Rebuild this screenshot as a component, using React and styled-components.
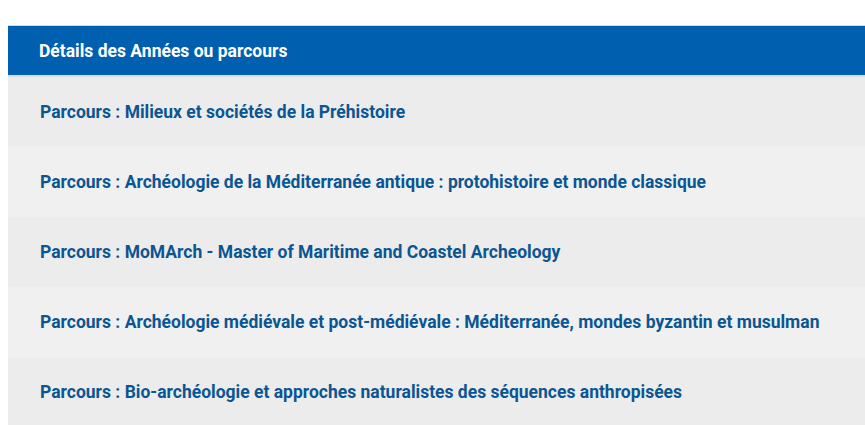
import styled, { createGlobalStyle } from "styled-components";

const GlobalStyle = createGlobalStyle`
  body {
    margin: 0;
    background: #fff;
    font-family: Roboto, "Liberation Sans", sans-serif;
  }
`;

const parcours = [
  "Milieux et sociétés de la Préhistoire",
  "Archéologie de la Méditerranée antique : protohistoire et monde classique",
  "MoMArch - Master of Maritime and Coastel Archeology",
  "Archéologie médiévale et post-médiévale : Méditerranée, mondes byzantin et musulman",
  "Bio-archéologie et approches naturalistes des séquences anthropisées",
];

const App = () => {
  return (
    <>
      <GlobalStyle />
      <Page>
        <Panel>
          <Header>Détails des Années ou parcours</Header>
          <List>
            {parcours.map((p, i) => (
              <Row key={p} $alt={i % 2 === 1}>
                <a>Parcours : {p}</a>
              </Row>
            ))}
          </List>
        </Panel>
      </Page>
    </>
  );
};

export default App;

const Page = styled.div`
  padding: 25px 0 0 8px;
  width: 900px;
`;

const Panel = styled.div`
  border-top: 1px solid #d4d8dc;
`;

const Header = styled.h2`
  margin: 0;
  height: 49px;
  display: flex;
  align-items: center;
  padding-left: 31px;
  background-color: #005fae;
  color: #fff;
  font-size: 17.5px;
  font-weight: 700;
  border-bottom: 2px solid #dcdcdc;
`;

const List = styled.ul`
  margin: 0;
  padding: 0;
  list-style: none;
`;

const Row = styled.li`
  height: 70px;
  display: flex;
  align-items: center;
  padding-left: 32px;
  background-color: ${(p) => (p.$alt ? "#f0f0f0" : "#ececec")};

  a {
    color: #0b5592;
    font-size: 17.5px;
    font-weight: 700;
    cursor: pointer;
  }
`;
